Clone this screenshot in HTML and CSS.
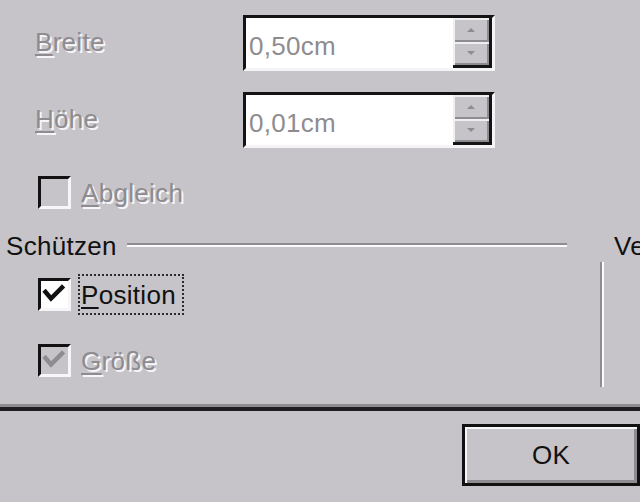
FILE: index.html
```html
<!DOCTYPE html>
<html lang="de">
<head>
<meta charset="utf-8">
<title>Position und Größe</title>
<link rel="stylesheet" href="styles.css">
</head>
<body>
<div class="page">
  <div class="form">
    <div class="field">
      <span class="flabel dis"><u>B</u>reite</span>
      <div class="spin">
        <span class="val">0,50cm</span>
        <div class="arrows"><span class="arr"><i class="tri up"></i></span><span class="arr"><i class="tri down"></i></span></div>
      </div>
    </div>
    <div class="field field2">
      <span class="flabel dis"><u>H</u>öhe</span>
      <div class="spin">
        <span class="val">0,01cm</span>
        <div class="arrows"><span class="arr"><i class="tri up"></i></span><span class="arr"><i class="tri down"></i></span></div>
      </div>
    </div>
    <div class="check-row abgleich">
      <span class="box off"></span>
      <span class="lbl dis"><u>A</u>bgleich</span>
    </div>
  </div>

  <div class="lower">
    <div class="group">
      <div class="legend"><span class="legend-text">Schützen</span><span class="etch"></span></div>
      <div class="check-row pos-row">
        <span class="box on"><svg width="27" height="27" viewBox="0 0 27 27"><polyline points="4.5,11 10,17.5 21,6.5" fill="none" stroke="#111" stroke-width="4.5" stroke-linecap="square"/></svg></span>
        <span class="lbl focus"><u>P</u>osition</span>
      </div>
      <div class="check-row size-row">
        <span class="box off"><svg width="27" height="27" viewBox="0 0 27 27"><polyline points="4.5,11 10,17.5 21,6.5" fill="none" stroke="#8e8c90" stroke-width="4.5" stroke-linecap="square"/></svg></span>
        <span class="lbl dis"><u>G</u>röße</span>
      </div>
    </div>
    <div class="vsep"></div>
    <div class="right">
      <div class="legend"><span class="legend-text">Verankerung</span></div>
    </div>
  </div>

  <div class="hsep"></div>

  <div class="buttons">
    <div class="btn">OK</div>
  </div>
</div>
</body>
</html>
```

FILE: styles.css
```css
html, body {
  margin: 0;
  padding: 0;
}
body {
  background: #c6c4c8;
  font-family: "Liberation Sans", Arial, sans-serif;
  font-size: 26px;
  line-height: 30px;
  letter-spacing: 0.3px;
  color: #111;
}
.page {
  width: 640px;
  height: 502px;
  overflow: hidden;
}
u {
  text-decoration-thickness: 2px;
  text-underline-offset: 3px;
}
.dis {
  color: #8e8c90;
  text-shadow: 2px 2px 0 #f6f5f7;
}

/* top form */
.form {
  padding: 15px 0 0 35px;
}
.field {
  display: flex;
  height: 56px;
}
.field2 {
  margin-top: 21px;
}
.flabel {
  width: 208px;
  padding-top: 12px;
}
.spin {
  width: 252px;
  height: 56px;
  box-sizing: border-box;
  border-top: 3px solid #141414;
  border-left: 3px solid #141414;
  border-right: 3px solid #f4f3f5;
  border-bottom: 3px solid #f4f3f5;
  background: #fff;
  display: flex;
}
.val {
  flex: 1;
  padding: 13px 0 0 3px;
  color: #8e8c90;
}
.arrows {
  width: 36px;
  display: flex;
  flex-direction: column;
  border-right: 3px solid #141414;
  border-bottom: 3px solid #141414;
}
.arr {
  flex: 1;
  background: #c6c4c8;
  box-shadow: inset 2px 2px 0 #efeef0, inset -2px -2px 0 #8e8c90;
  display: flex;
  align-items: center;
  justify-content: center;
}
.tri {
  width: 0;
  height: 0;
  border-left: 4px solid transparent;
  border-right: 4px solid transparent;
}
.tri.up {
  border-bottom: 4px solid #8e8c90;
}
.tri.down {
  border-top: 4px solid #8e8c90;
}

/* checkbox rows */
.check-row {
  display: flex;
  align-items: center;
  height: 41px;
}
.abgleich {
  margin: 24px 0 0 3px;
}
.box {
  width: 33px;
  height: 33px;
  box-sizing: border-box;
  border-top: 3px solid #121212;
  border-left: 3px solid #121212;
  border-right: 3px solid #f6f5f7;
  border-bottom: 3px solid #f6f5f7;
  display: flex;
  flex: none;
}
.box.on {
  background: #fff;
}
.box.off {
  background: #c6c4c8;
}
.lbl {
  margin-left: 7px;
  padding: 4px 6px 3px 1px;
  border: 2px dotted transparent;
}
.lbl.focus {
  border-color: #2a2a2a;
}

/* lower section */
.lower {
  display: flex;
  margin-top: 18px;
  height: 156px;
}
.group {
  width: 561px;
  padding-left: 6px;
  flex: none;
}
.legend {
  display: flex;
  align-items: center;
  height: 30px;
  white-space: nowrap;
}
.etch {
  flex: 1;
  height: 0;
  margin: -2px 0 0 10px;
  border-top: 2px solid #8e8c90;
  border-bottom: 2px solid #fbfbfc;
}
.pos-row {
  margin: 13px 0 0 32px;
}
.size-row {
  margin: 25px 0 0 32px;
}
.vsep {
  flex: none;
  width: 0;
  height: 125px;
  margin: 31px 0 0 33px;
  border-left: 2px solid #8e8c90;
  border-right: 2px solid #fbfbfc;
}
.right {
  flex: none;
  margin-left: 10px;
}

/* bottom */
.hsep {
  margin-top: 17px;
  height: 0;
  border-top: 3px solid #8e8c90;
  border-bottom: 4px solid #1e1e20;
}
.buttons {
  display: flex;
  justify-content: flex-end;
  margin-top: 13px;
}
.btn {
  width: 178px;
  height: 62px;
  box-sizing: border-box;
  border: 3px solid #111;
  box-shadow: inset 2px 2px 0 #f6f5f7, inset -3px -3px 0 #8e8c90;
  display: flex;
  align-items: center;
  justify-content: center;
  color: #111;
}
```
